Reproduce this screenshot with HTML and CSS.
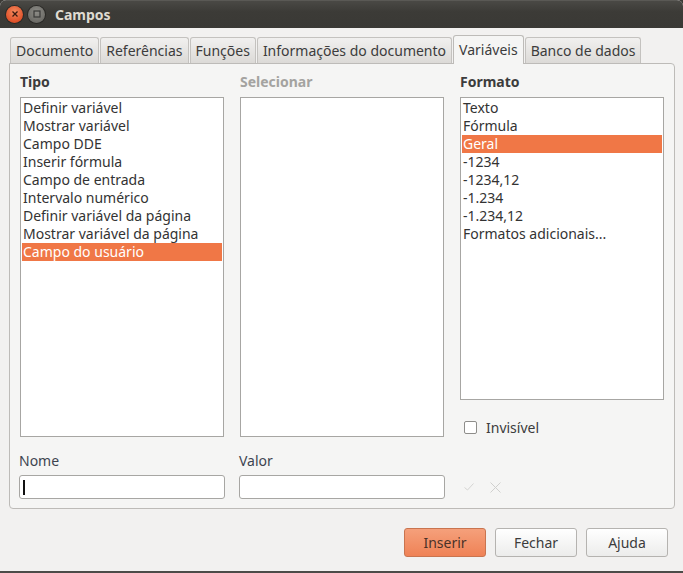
FILE: index.html
```html
<!DOCTYPE html>
<html lang="pt">
<head>
<meta charset="utf-8">
<title>Campos</title>
<link rel="stylesheet" href="styles.css">
</head>
<body>
<div class="window">
  <header class="titlebar">
    <span class="wbtn close"><svg width="8" height="8" viewBox="0 0 8 8"><path d="M1.5 1.5 L6.5 6.5 M6.5 1.5 L1.5 6.5" stroke="#3a1a10" stroke-width="1.3"/></svg></span>
    <span class="wbtn max"><svg width="8" height="8" viewBox="0 0 8 8"><rect x="1" y="1" width="6" height="6" fill="none" stroke="#3a3a38" stroke-width="1.2"/></svg></span>
    <span class="title">Campos</span>
  </header>
  <main class="body">
    <nav class="tabs">
      <span class="tab">Documento</span>
      <span class="tab">Referências</span>
      <span class="tab">Funções</span>
      <span class="tab">Informações do documento</span>
      <span class="tab active">Variáveis</span>
      <span class="tab">Banco de dados</span>
    </nav>
    <section class="panel">
      <div class="cols">
        <div class="col">
          <h3 class="hdr">Tipo</h3>
          <ul class="list tall">
            <li>Definir variável</li>
            <li>Mostrar variável</li>
            <li>Campo DDE</li>
            <li>Inserir fórmula</li>
            <li>Campo de entrada</li>
            <li>Intervalo numérico</li>
            <li>Definir variável da página</li>
            <li>Mostrar variável da página</li>
            <li class="sel">Campo do usuário</li>
          </ul>
        </div>
        <div class="col">
          <h3 class="hdr dim">Selecionar</h3>
          <ul class="list tall"></ul>
        </div>
        <div class="col">
          <h3 class="hdr">Formato</h3>
          <ul class="list short">
            <li>Texto</li>
            <li>Fórmula</li>
            <li class="sel">Geral</li>
            <li>-1234</li>
            <li>-1234,12</li>
            <li>-1.234</li>
            <li>-1.234,12</li>
            <li>Formatos adicionais...</li>
          </ul>
          <label class="check"><span class="box"></span>Invisível</label>
        </div>
      </div>
      <div class="fields">
        <div class="field">
          <span class="lbl">Nome</span>
          <div class="input"><span class="caret"></span></div>
        </div>
        <div class="field">
          <span class="lbl">Valor</span>
          <div class="input"></div>
        </div>
        <div class="icons">
          <svg width="10" height="8" viewBox="0 0 10 8"><path d="M0.5 4.5 L3.5 7 L9.5 0.5" fill="none" stroke="#d4d4d2" stroke-width="1"/></svg>
          <svg width="11" height="11" viewBox="0 0 11 11"><path d="M0.5 0.5 L10.5 10.5 M10.5 0.5 L0.5 10.5" stroke="#d0d0ce" stroke-width="1"/></svg>
        </div>
      </div>
    </section>
    <footer class="buttons">
      <button class="btn primary">Inserir</button>
      <button class="btn">Fechar</button>
      <button class="btn">Ajuda</button>
    </footer>
  </main>
  <div class="bottomline"></div>
</div>
</body>
</html>
```
FILE: styles.css
```css
* { box-sizing: border-box; }
html, body { margin: 0; padding: 0; background: #3c3b37; }
body { width: 683px; height: 573px; overflow: hidden; font-family: "Noto Sans", "DejaVu Sans", sans-serif; font-size: 14px; color: #3c3c3c; }
.window { width: 683px; height: 573px; display: flex; flex-direction: column; background: #f2f1f0; border-radius: 6px 6px 0 0; overflow: hidden; }
.titlebar { height: 28px; flex: none; display: flex; align-items: center; padding-left: 6px; padding-bottom: 1px; background: linear-gradient(#4a4945, #3c3b37 40%, #3a3935); border-top: 1px solid #5a5955; }
.wbtn { width: 17px; height: 17px; border-radius: 50%; display: flex; align-items: center; justify-content: center; margin-right: 5px; }
.wbtn.close { background: radial-gradient(circle at 50% 35%, #f58a5e, #e0522a 70%, #c8401c); box-shadow: 0 0 0 1px #2a2926; }
.wbtn.max { background: radial-gradient(circle at 50% 35%, #8c8b86, #6e6d68 70%, #5e5d59); box-shadow: 0 0 0 1px #2a2926; }
.title { margin-left: 5px; font-weight: bold; font-size: 14px; color: #dfdbd2; }
.body { flex: 1; display: flex; flex-direction: column; padding: 7px 8px 0 9px; }
.tabs { display: flex; align-items: flex-end; height: 28px; padding-left: 1px; position: relative; z-index: 1; }
.tab { height: 26px; padding: 0 5px; display: flex; align-items: center; font-size: 14px; color: #3c3c3c; border: 1px solid #c4c2bf; border-bottom: none; border-radius: 3px 3px 0 0; background: linear-gradient(#f1f0ef, #dcdad7); margin-right: 1px; }
.tab.active { background: #f5f5f4; border-color: #bdbbb8; margin-bottom: -1px; height: 29px; padding-bottom: 1px; }
.panel { height: 446px; border: 1px solid #bdbbb8; border-radius: 0 4px 4px 4px; background: #f5f5f4; padding: 8px 10px 0 10px; display: flex; flex-direction: column; }
.cols { display: flex; gap: 16px; }
.col { width: 204px; display: flex; flex-direction: column; }
.hdr { margin: 0; height: 25px; font-size: 14px; font-weight: bold; color: #3c3c3c; line-height: 20px; }
.hdr.dim { color: #a4a3a0; }
.list { list-style: none; margin: 0; padding: 1px 1px; background: #fff; border: 1px solid #a7a6a3; }
.list.tall { height: 340px; }
.list.short { height: 303px; }
.list li { height: 18px; line-height: 18px; padding-left: 1px; color: #333; white-space: nowrap; }
.list li.sel { background: #f07746; color: #fff; }
.check { display: flex; align-items: center; margin-top: 18px; margin-left: 4px; font-size: 14px; color: #3c3c3c; }
.box { width: 13px; height: 13px; border: 1px solid #8e8d8a; border-radius: 2px; background: #fff; margin-right: 9px; }
.fields { display: flex; gap: 14px; margin-top: 14px; margin-left: -1px; align-items: flex-end; }
.field { width: 206px; display: flex; flex-direction: column; }
.lbl { height: 24px; line-height: 19px; font-size: 14px; color: #3d4450; }
.input { height: 24px; background: #fff; border: 1px solid #a7a6a3; border-radius: 3px; display: flex; align-items: center; padding-left: 3px; }
.caret { width: 2px; height: 15px; background: #111; }
.icons { display: flex; align-items: center; gap: 16px; height: 24px; margin-left: 5px; }
.buttons { display: flex; justify-content: flex-end; gap: 9px; padding: 19px 7px 0 0; }
.btn { font-family: inherit; font-size: 14px; color: #3c3c3c; width: 82px; height: 29px; border: 1px solid #b5b3b0; border-radius: 3px; background: linear-gradient(#ffffff, #ececeb); padding: 0; }
.btn.primary { background: linear-gradient(#f5a07b, #ef8256); border-color: #c9744f; color: #4a3228; }
.bottomline { height: 2px; background: #4c4b48; flex: none; }
```
